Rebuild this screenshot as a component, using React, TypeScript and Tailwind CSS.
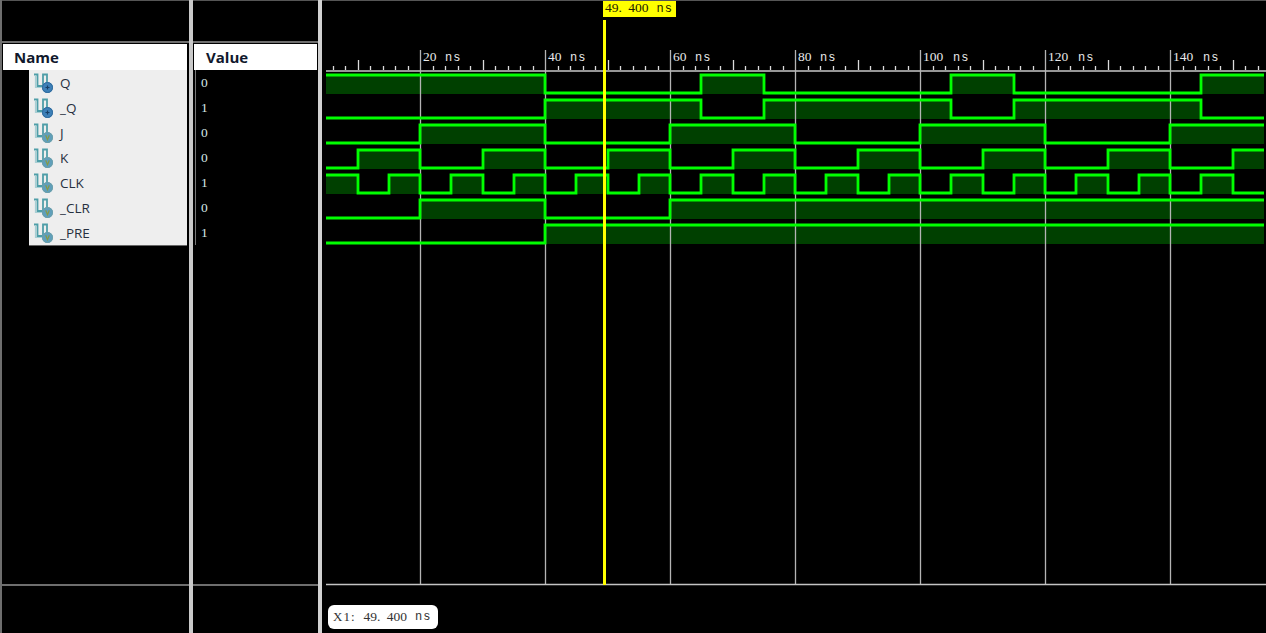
import React from "react";

const rowH = 25;
const names = ["Q", "_Q", "J", "K", "CLK", "_CLR", "_PRE"];
const values = ["0", "1", "0", "0", "1", "0", "1"];

const X0 = 326;
const X1 = 1264;

const qT = [545, 701, 764, 951, 1014, 1201];
const waves: { start: number; t: number[] }[] = [
  { start: 1, t: qT },
  { start: 0, t: qT },
  { start: 0, t: [420, 545, 670, 795, 920, 1045, 1170] },
  { start: 0, t: [358, 420, 483, 545, 608, 670, 733, 795, 858, 920, 983, 1045, 1108, 1170, 1233] },
  {
    start: 1,
    t: [358, 389, 420, 451, 483, 514, 545, 576, 608, 639, 670, 701, 733, 764, 795, 826, 858, 889, 920, 951, 983, 1014, 1045, 1076, 1108, 1139, 1170, 1201, 1233],
  },
  { start: 0, t: [420, 545, 670] },
  { start: 0, t: [545] },
];

function linePath(w: { start: number; t: number[] }, hi: number, lo: number) {
  let level = w.start;
  let d = `M${X0} ${level ? hi : lo}`;
  for (const x of w.t) {
    d += ` H${x}`;
    level = 1 - level;
    d += ` V${level ? hi : lo}`;
  }
  return d + ` H${X1}`;
}

function fillRects(w: { start: number; t: number[] }, hi: number, lo: number) {
  const pts = [X0, ...w.t, X1];
  const out: React.ReactNode[] = [];
  let level = w.start;
  for (let i = 0; i < pts.length - 1; i++) {
    if (level) out.push(<rect key={i} x={pts[i]} y={hi} width={pts[i + 1] - pts[i]} height={lo + 1 - hi} fill="#004000" />);
    level = 1 - level;
  }
  return out;
}

function SignalIcon({ output }: { output: boolean }) {
  return (
    <svg width="22" height="22" viewBox="0 0 22 22" className="shrink-0">
      <path d="M2 2.5H5.5V14H11V2.5H15V11" fill="none" stroke="#4f9ea8" strokeWidth="1.8" />
      <path d="M3.5 3V15.5H12" fill="none" stroke="#a8cfd4" strokeWidth="1.2" />
      <circle cx="15.5" cy="15.5" r="5.5" fill={output ? "#3d80b8" : "#5f9fbc"} />
      <circle cx="15.5" cy="15.5" r="5" fill="none" stroke={output ? "#2f6a9c" : "#6d9fa8"} strokeWidth="1" />
      {output ? (
        <path d="M13.5 15.5H17.5M15.5 13.5V17.5" stroke="#173f66" strokeWidth="1.2" />
      ) : (
        <path d="M13.7 13.3L15.5 17.8L17.3 13.3" fill="none" stroke="#8a9a40" strokeWidth="1.1" />
      )}
    </svg>
  );
}

function Chart() {
  const ticks: React.ReactNode[] = [];
  for (let i = -7; i <= 68; i++) {
    const x = Math.round(420 + i * 12.5);
    if (x < 330 || x > 1264) continue;
    if (i % 10 === 0) continue;
    const mid = i % 5 === 0;
    ticks.push(<line key={i} x1={x + 0.5} x2={x + 0.5} y1={mid ? 60 : 66} y2={70} stroke="#dcdcdc" strokeWidth="1.3" />);
  }
  const labels = [20, 40, 60, 80, 100, 120, 140];
  return (
    <svg width="944" height="586" viewBox="322 0 944 586" className="block">
      {waves.map((w, i) => (
        <g key={i} shapeRendering="crispEdges">{fillRects(w, 75 + i * rowH, 93 + i * rowH)}</g>
      ))}
      <line x1={X0} x2={1266} y1={71} y2={71} stroke="#c8c8c8" strokeWidth="1.5" />
      {ticks}
      {labels.map((n, i) => (
        <g key={n}>
          <line x1={420.5 + i * 125} x2={420.5 + i * 125} y1={50} y2={585} stroke="#b4b4b4" strokeWidth="1.3" />
          <text x={423 + i * 125} y={60.5} fill="#e8e8e8" fontSize="13.5" fontFamily="'Liberation Serif', serif">
            {n}
          </text>
          <text
            x={423 + i * 125 + (n >= 100 ? 30 : 22)}
            y={60.5}
            fill="#e8e8e8"
            fontSize="12"
            letterSpacing="1"
            fontFamily="'Liberation Mono', monospace"
          >
            ns
          </text>
        </g>
      ))}
      {waves.map((w, i) => (
        <path key={i} d={linePath(w, 75 + i * rowH, 93 + i * rowH)} fill="none" stroke="#00ff00" strokeWidth="2.8" />
      ))}
      <line x1={X0} x2={1266} y1={584.5} y2={584.5} stroke="#c4c4c4" strokeWidth="1.3" />
      <rect x={603} y={20} width={3} height={565} fill="#ffff00" shapeRendering="crispEdges" />
    </svg>
  );
}

function Bar() {
  return <div className="h-[2px] shrink-0 bg-[#6e6e6e]" />;
}

function NsValue({ gap }: { gap: string }) {
  return (
    <>
      <span className="font-['Liberation_Serif',serif] text-[13.5px] [word-spacing:3px]">49. 400</span>
      <span className={`${gap} font-['Liberation_Mono',monospace] text-[12px] tracking-[1px]`}>ns</span>
    </>
  );
}

export default function App() {
  const sans = "font-['Open_Sans','Noto_Sans',sans-serif]";
  return (
    <div className="flex h-[633px] w-[1266px] overflow-hidden bg-black">
      {/* Name column */}
      <div className="flex h-full w-[189px] shrink-0 flex-col border-l-2 border-[#6e6e6e]">
        <div className="h-[41px] shrink-0 border-t border-[#555555]" />
        <Bar />
        <div className="flex-1 pt-px">
          <div className={`ml-px mr-[2px] flex h-[26px] items-center bg-white pl-[11px] text-[15px] font-bold text-[#10182c] ${sans}`}>
            Name
          </div>
          <div className="ml-[27px] mr-[2px] border-b border-[#666666] bg-[#eeeeee]">
            {names.map((n) => (
              <div key={n} className={`flex h-[25px] items-center gap-[6px] pl-[3px] pt-px text-[13.5px] text-[#27303f] ${sans}`}>
                <SignalIcon output={n === "Q" || n === "_Q"} />
                <span>{n}</span>
              </div>
            ))}
          </div>
        </div>
        <Bar />
        <div className="h-[47px] shrink-0" />
      </div>
      <div className="w-[4px] shrink-0 bg-[#c9c9c9]" />
      {/* Value column */}
      <div className="flex h-full w-[125px] shrink-0 flex-col">
        <div className="h-[41px] shrink-0 border-t border-[#555555]" />
        <Bar />
        <div className="flex-1 pt-px">
          <div className={`ml-px mr-px flex h-[26px] items-center bg-white pl-[12px] text-[15px] font-bold text-[#10182c] ${sans}`}>
            Value
          </div>
          <div className="ml-[2px] border-l border-[#777777] pl-[5px]">
            {values.map((v, i) => (
              <div key={i} className="flex h-[25px] items-center pt-[2px] font-['Liberation_Serif',serif] text-[13.5px] text-[#d5e6e6]">
                {v}
              </div>
            ))}
          </div>
        </div>
        <Bar />
        <div className="h-[47px] shrink-0" />
      </div>
      <div className="w-[4px] shrink-0 bg-[#d2d2d2]" />
      {/* Wave column */}
      <div className="relative flex h-full flex-1 flex-col border-t border-[#555555]">
        <div className="-mt-px shrink-0">
          <Chart />
        </div>
        <div className="absolute left-[281px] top-0 flex h-[16px] w-[73px] items-center whitespace-pre bg-[#ffff00] pb-px pl-[2px] text-[#202000]">
          <NsValue gap="ml-[8px]" />
        </div>
        <div className="pl-[6px] pt-[19px]">
          <div className="flex h-[24px] w-[110px] items-center whitespace-pre rounded-[6px] bg-white pl-[5px] text-[#333333]">
            <span className="mr-[8px] font-['Liberation_Serif',serif] text-[13px] tracking-[1px]">X1:</span>
            <NsValue gap="ml-[8px]" />
          </div>
        </div>
      </div>
    </div>
  );
}
